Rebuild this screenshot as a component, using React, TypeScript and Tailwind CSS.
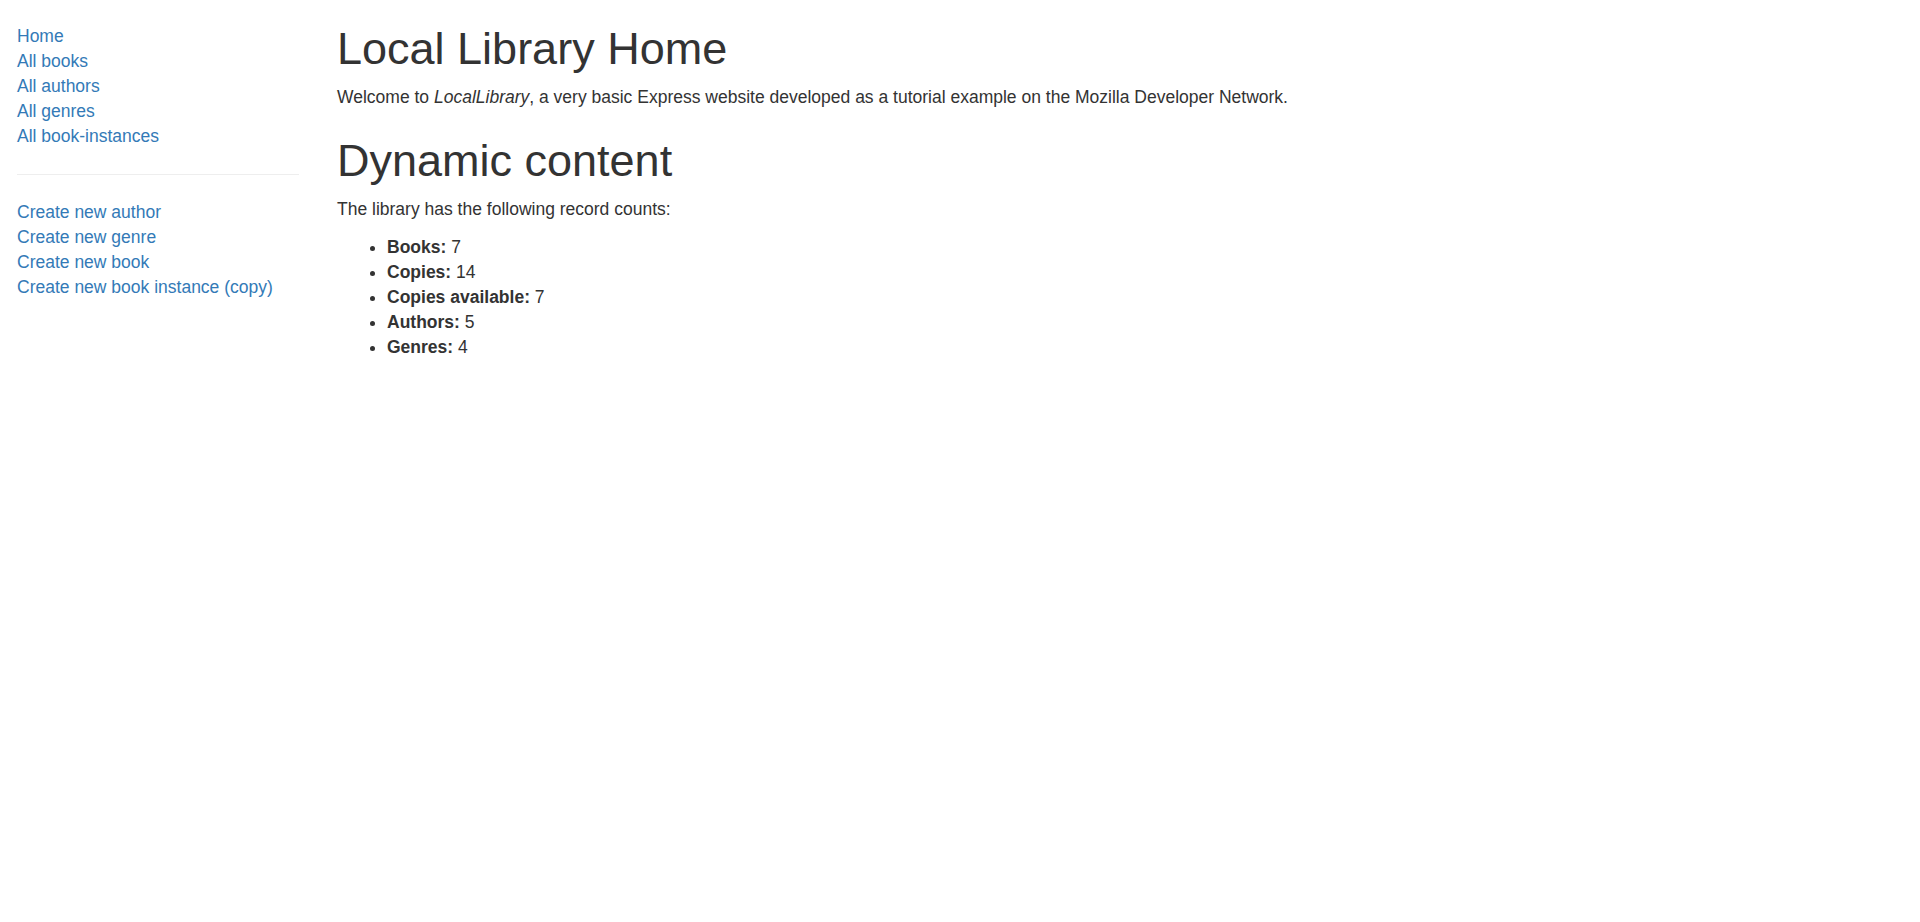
const sideLinks = ["Home", "All books", "All authors", "All genres", "All book-instances"];
const createLinks = [
  "Create new author",
  "Create new genre",
  "Create new book",
  "Create new book instance (copy)",
];

const counts = [
  { label: "Books:", value: 7 },
  { label: "Copies:", value: 14 },
  { label: "Copies available:", value: 7 },
  { label: "Authors:", value: 5 },
  { label: "Genres:", value: 4 },
];

export default function App() {
  return (
    <div
      className="min-h-[922px] w-full bg-white text-[17.5px] leading-[25px] text-[#333]"
      style={{ fontFamily: '"Liberation Sans", Arial, sans-serif' }}
    >
      <div className="flex">
        <div className="w-[320px] shrink-0 pl-[17px] pr-[21px]">
          <ul className="mt-[24px]">
            {sideLinks.map((l) => (
              <li key={l}>
                <a href="#" className="text-[#337ab7] hover:underline">
                  {l}
                </a>
              </li>
            ))}
            <li>
              <hr className="my-[25px] border-t border-[#eee]" />
            </li>
            {createLinks.map((l) => (
              <li key={l}>
                <a href="#" className="text-[#337ab7] hover:underline">
                  {l}
                </a>
              </li>
            ))}
          </ul>
        </div>
        <div className="flex-1 pl-[17px]">
          <h1 className="mt-[24px] mb-[11px] text-[45px] leading-[49.5px] font-normal">
            Local Library Home
          </h1>
          <p className="mb-[12px]">
            Welcome to <em>LocalLibrary</em>, a very basic Express website developed as a tutorial
            example on the Mozilla Developer Network.
          </p>
          <h1 className="mt-[26px] mb-[12px] text-[45px] leading-[49.5px] font-normal">
            Dynamic content
          </h1>
          <p className="mb-[13px]">The library has the following record counts:</p>
          <ul className="list-disc pl-[50px]">
            {counts.map((c) => (
              <li key={c.label}>
                <strong className="font-bold">{c.label}</strong> {c.value}
              </li>
            ))}
          </ul>
        </div>
      </div>
    </div>
  );
}
